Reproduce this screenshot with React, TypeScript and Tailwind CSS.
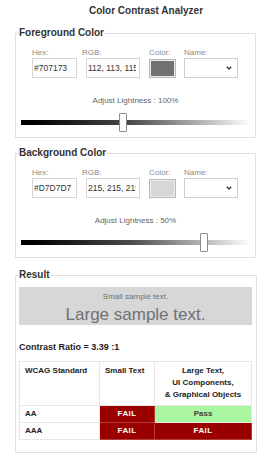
import React from "react";

type PanelProps = {
  title: string;
  hex: string;
  rgb: string;
  swatch: string;
  lightness: string;
  thumb: number;
};

function LightnessSlider({ thumb }: { thumb: number }) {
  return (
    <div className="relative ml-[2px] mr-[4px] flex h-[19px] items-center">
      <div className="h-[5px] w-full bg-[linear-gradient(to_right,#000,#000_6%,#4a4a4a_48%,#fafafa)]" />
      <div
        className="absolute top-0 h-[19px] w-[8px] -translate-x-1/2 rounded-[1px] border border-[#8c8c8c] bg-white"
        style={{ left: `${thumb}%` }}
      />
    </div>
  );
}

function ColorPanel({ title, hex, rgb, swatch, lightness, thumb }: PanelProps) {
  return (
    <fieldset className="mx-[15px] border border-[#e0e0e0] px-[3px] pt-[9px] pb-[5px]">
      <legend className="text-[10px] leading-[12px] font-bold text-[#333]">{title}</legend>

      {/* Inputs row */}
      <div className="ml-[13px] flex text-[8px] leading-[10px] text-[#8a8a8a]">
        <div className="flex w-[45px] flex-col">
          <span>Hex:</span>
          <input
            readOnly
            value={hex}
            className="h-[20px] w-[45px] border border-[#d6d6d6] bg-white pl-[1px] pr-[3px] text-[8.5px] text-[#333] outline-none"
          />
        </div>
        <div className="ml-[9px] flex w-[54px] flex-col">
          <span className="-ml-[4px]">RGB:</span>
          <input
            readOnly
            value={rgb}
            className="h-[20px] w-[54px] border border-[#d6d6d6] bg-white pl-[1px] pr-[3px] text-[8.5px] text-[#333] outline-none"
          />
        </div>
        <div className="ml-[9px] flex w-[27px] flex-col">
          <span>Color:</span>
          <div className="mt-[1px] h-[19px] w-[27px] border border-[#b8b8b8] bg-[#ececec] p-[1px]">
            <div className="h-full w-full" style={{ backgroundColor: swatch }} />
          </div>
        </div>
        <div className="ml-[8px] flex w-[54px] flex-col">
          <span>Name:</span>
          <div className="flex h-[20px] w-[54px] items-center justify-end border border-[#cfcfcf] bg-white pr-[5px]">
            <svg width="6" height="4" viewBox="0 0 6 4" fill="none">
              <path d="M0.8 0.8 L3 3 L5.2 0.8" stroke="#333" strokeWidth="1.3" />
            </svg>
          </div>
        </div>
      </div>

      <div className="mt-[18px] text-center text-[8px] leading-[10px] text-[#666]">
        Adjust Lightness : {lightness}
      </div>
      <div className="mt-[7px]">
        <LightnessSlider thumb={thumb} />
      </div>
    </fieldset>
  );
}

export default function App() {
  return (
    <div className="h-[466px] w-[271px] bg-white font-['Liberation_Sans',Arial,sans-serif] text-[#333]">
      <h1 className="pt-[5px] pl-[21px] text-center text-[10px] leading-[12px] font-bold text-[#333]">
        Color Contrast Analyzer
      </h1>

      <div className="mt-[10px]">
        <ColorPanel
          title="Foreground Color"
          hex="#707173"
          rgb="112, 113, 115"
          swatch="#707173"
          lightness="100%"
          thumb={45}
        />
      </div>

      <div className="mt-[9px]">
        <ColorPanel
          title="Background Color"
          hex="#D7D7D7"
          rgb="215, 215, 215"
          swatch="#d7d7d7"
          lightness="50%"
          thumb={80.6}
        />
      </div>

      {/* Result */}
      <fieldset className="mx-[15px] mt-[11px] border border-[#e0e0e0] pt-[0px] pr-[4px] pb-[12px] pl-[3px]">
        <legend className="text-[10px] leading-[12px] font-bold text-[#333]">Result</legend>

        <div className="mt-[6px] flex h-[38px] flex-col items-center bg-[#d7d7d7] pt-[5px] text-[#707173]">
          <div className="text-[8px] leading-[10px]">Small sample text.</div>
          <div className="mt-[2px] text-[17px] leading-[21px]">Large sample text.</div>
        </div>

        <div className="mt-[16px] text-[9px] leading-[12px] font-bold text-[#222]">
          Contrast Ratio = 3.39 :1
        </div>

        <table className="mt-[8px] w-full table-fixed border-collapse text-[8px] leading-[12px] text-[#222]">
          <colgroup>
            <col className="w-[80px]" />
            <col className="w-[55px]" />
            <col className="w-[97px]" />
          </colgroup>
          <thead>
            <tr className="h-[44px]">
              <th className="border border-[#e6e6e6] px-[5px] pt-[3px] text-left align-top font-bold">WCAG Standard</th>
              <th className="border border-[#e6e6e6] px-[5px] pt-[3px] text-left align-top font-bold">Small Text</th>
              <th className="border border-[#e6e6e6] px-[2px] pt-[3px] text-center align-top font-bold">
                Large Text,
                <br />
                UI Components,
                <br />
                &amp; Graphical Objects
              </th>
            </tr>
          </thead>
          <tbody>
            <tr className="h-[17px]">
              <td className="border border-[#e6e6e6] px-[5px] font-bold">AA</td>
              <td className="border border-[#b53a3a] bg-[#990000] text-center font-bold tracking-[0.4px] text-white">FAIL</td>
              <td className="border border-[#e6e6e6] bg-[#a9f5a0] text-center font-bold text-[#444]">Pass</td>
            </tr>
            <tr className="h-[17px]">
              <td className="border border-[#e6e6e6] px-[5px] font-bold">AAA</td>
              <td className="border border-[#b53a3a] bg-[#990000] text-center font-bold tracking-[0.4px] text-white">FAIL</td>
              <td className="border border-[#b53a3a] bg-[#990000] text-center font-bold tracking-[0.4px] text-white">FAIL</td>
            </tr>
          </tbody>
        </table>
      </fieldset>
    </div>
  );
}
